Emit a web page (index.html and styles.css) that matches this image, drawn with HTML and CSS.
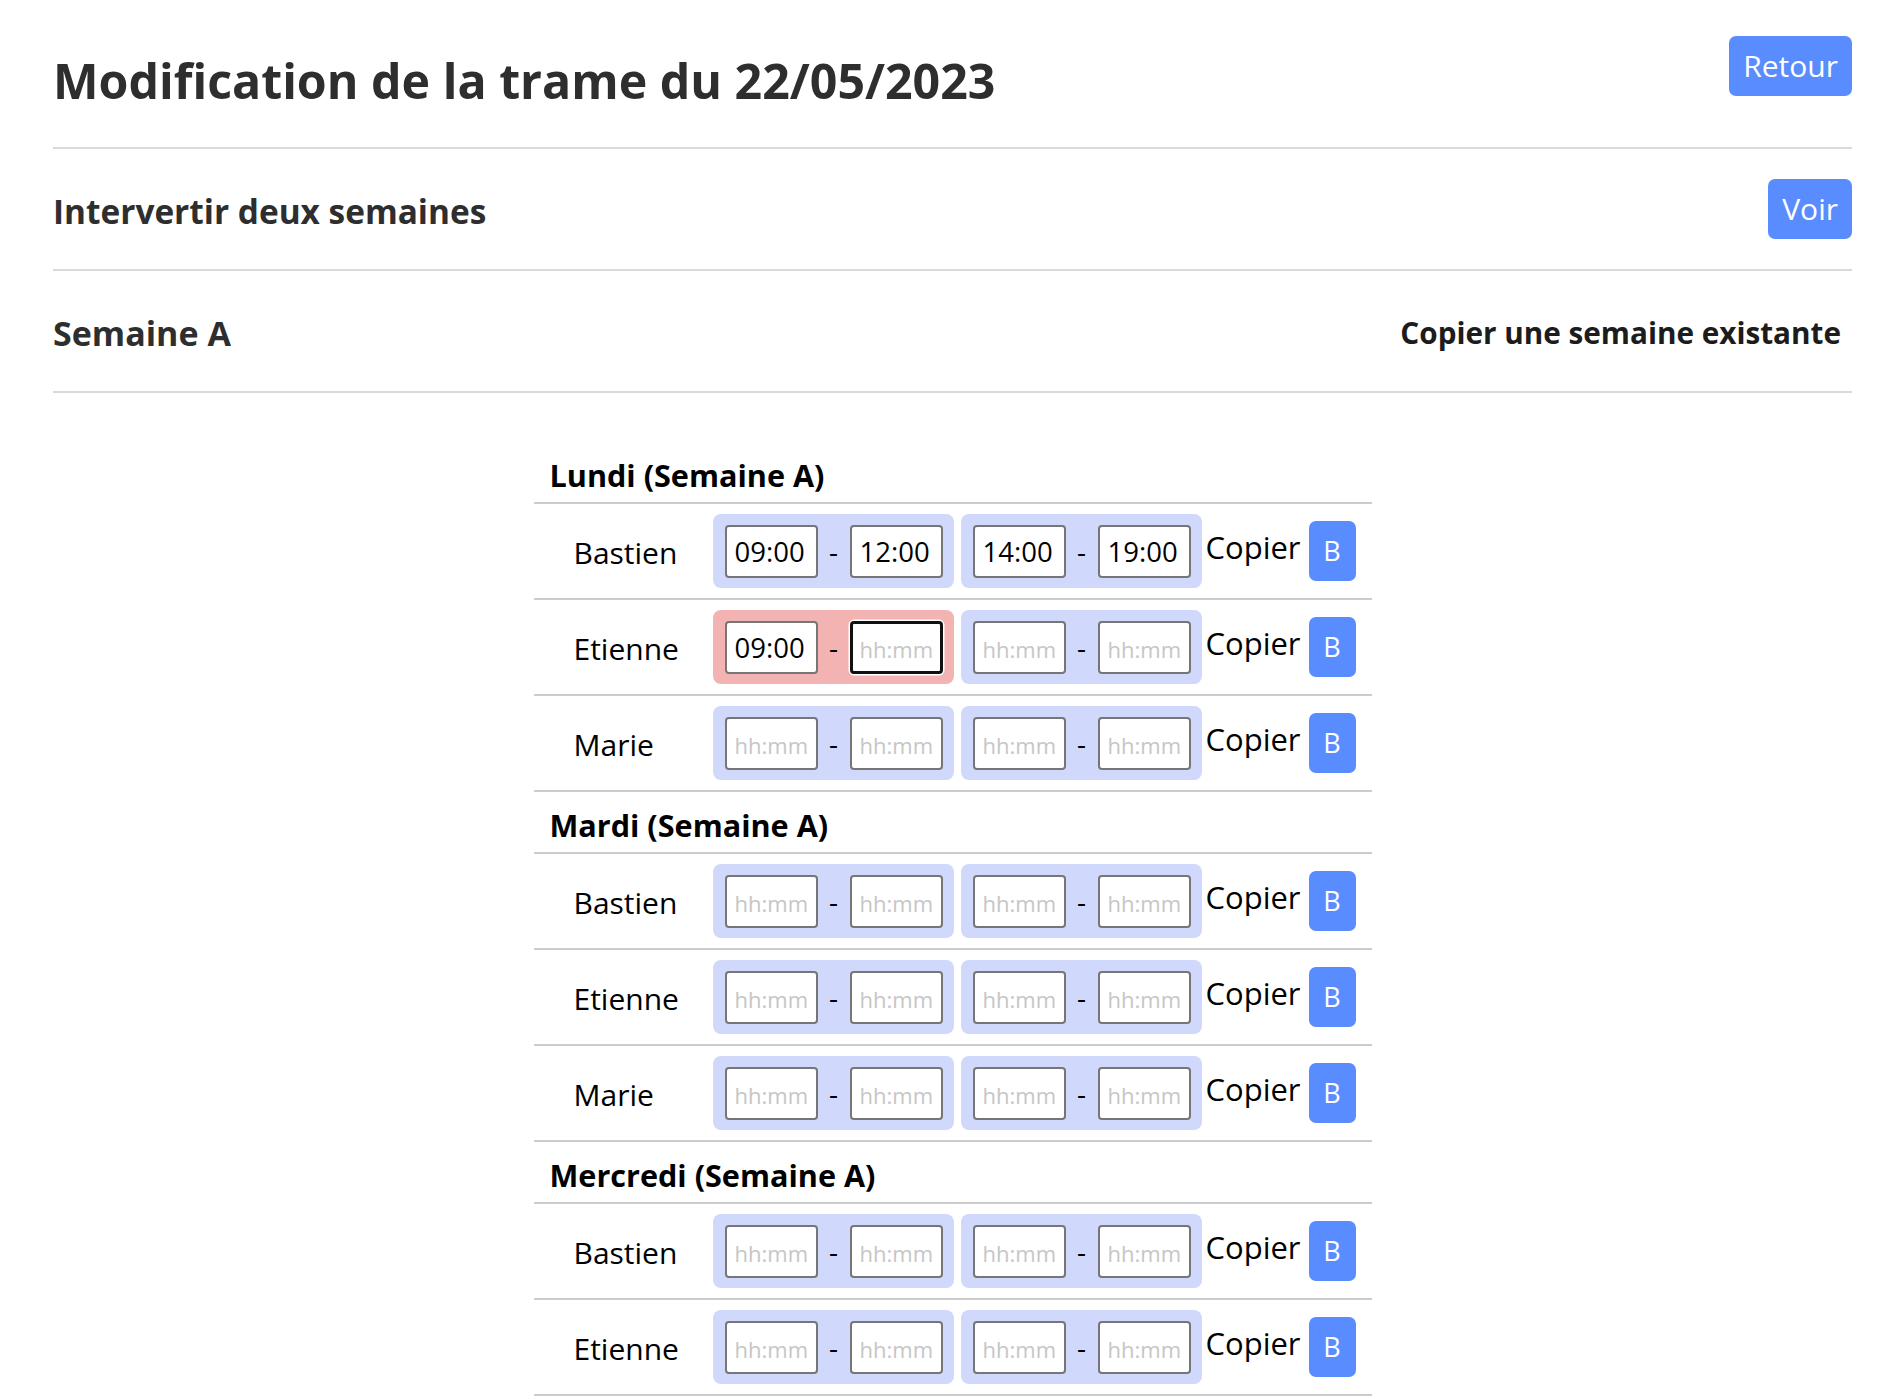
FILE: index.html
```html
<!DOCTYPE html>
<html lang="fr">
<head>
<meta charset="utf-8">
<title>Modification de la trame</title>
<link rel="stylesheet" href="styles.css">
</head>
<body>
<div class="page">
  <header class="bar bar--title">
    <h1 class="title">Modification de la trame du 22/05/2023</h1>
    <button class="btn">Retour</button>
  </header>
  <section class="bar bar--swap">
    <h2 class="subtitle">Intervertir deux semaines</h2>
    <button class="btn">Voir</button>
  </section>
  <section class="bar bar--week">
    <h2 class="subtitle">Semaine A</h2>
    <span class="copy-week">Copier une semaine existante</span>
  </section>

  <div class="trame">
    <div class="day">Lundi (Semaine A)</div>
    <div class="row">
      <div class="name">Bastien</div>
      <div class="slot"><input class="time" value="09:00" placeholder="hh:mm"><span class="dash">-</span><input class="time" value="12:00" placeholder="hh:mm"></div>
      <div class="slot"><input class="time" value="14:00" placeholder="hh:mm"><span class="dash">-</span><input class="time" value="19:00" placeholder="hh:mm"></div>
      <span class="copier">Copier</span><button class="bbtn">B</button>
    </div>
    <div class="row">
      <div class="name">Etienne</div>
      <div class="slot slot--error"><input class="time" value="09:00" placeholder="hh:mm"><span class="dash">-</span><input class="time time--focus" placeholder="hh:mm"></div>
      <div class="slot"><input class="time" placeholder="hh:mm"><span class="dash">-</span><input class="time" placeholder="hh:mm"></div>
      <span class="copier">Copier</span><button class="bbtn">B</button>
    </div>
    <div class="row">
      <div class="name">Marie</div>
      <div class="slot"><input class="time" placeholder="hh:mm"><span class="dash">-</span><input class="time" placeholder="hh:mm"></div>
      <div class="slot"><input class="time" placeholder="hh:mm"><span class="dash">-</span><input class="time" placeholder="hh:mm"></div>
      <span class="copier">Copier</span><button class="bbtn">B</button>
    </div>

    <div class="day">Mardi (Semaine A)</div>
    <div class="row">
      <div class="name">Bastien</div>
      <div class="slot"><input class="time" placeholder="hh:mm"><span class="dash">-</span><input class="time" placeholder="hh:mm"></div>
      <div class="slot"><input class="time" placeholder="hh:mm"><span class="dash">-</span><input class="time" placeholder="hh:mm"></div>
      <span class="copier">Copier</span><button class="bbtn">B</button>
    </div>
    <div class="row">
      <div class="name">Etienne</div>
      <div class="slot"><input class="time" placeholder="hh:mm"><span class="dash">-</span><input class="time" placeholder="hh:mm"></div>
      <div class="slot"><input class="time" placeholder="hh:mm"><span class="dash">-</span><input class="time" placeholder="hh:mm"></div>
      <span class="copier">Copier</span><button class="bbtn">B</button>
    </div>
    <div class="row">
      <div class="name">Marie</div>
      <div class="slot"><input class="time" placeholder="hh:mm"><span class="dash">-</span><input class="time" placeholder="hh:mm"></div>
      <div class="slot"><input class="time" placeholder="hh:mm"><span class="dash">-</span><input class="time" placeholder="hh:mm"></div>
      <span class="copier">Copier</span><button class="bbtn">B</button>
    </div>

    <div class="day">Mercredi (Semaine A)</div>
    <div class="row">
      <div class="name">Bastien</div>
      <div class="slot"><input class="time" placeholder="hh:mm"><span class="dash">-</span><input class="time" placeholder="hh:mm"></div>
      <div class="slot"><input class="time" placeholder="hh:mm"><span class="dash">-</span><input class="time" placeholder="hh:mm"></div>
      <span class="copier">Copier</span><button class="bbtn">B</button>
    </div>
    <div class="row">
      <div class="name">Etienne</div>
      <div class="slot"><input class="time" placeholder="hh:mm"><span class="dash">-</span><input class="time" placeholder="hh:mm"></div>
      <div class="slot"><input class="time" placeholder="hh:mm"><span class="dash">-</span><input class="time" placeholder="hh:mm"></div>
      <span class="copier">Copier</span><button class="bbtn">B</button>
    </div>
  </div>
</div>
</body>
</html>
```

FILE: styles.css
```css
html, body {
  margin: 0;
  padding: 0;
  background: #ffffff;
}

body {
  font-family: "Open Sans", "Noto Sans", "DejaVu Sans", sans-serif;
  color: #000000;
}

.page {
  padding: 0 51px 0 53px;
}

.bar {
  display: flex;
  justify-content: space-between;
  align-items: flex-start;
  border-bottom: 2px solid #d9d9d9;
}

.bar--title {
  padding: 36px 0 37px;
}

.bar--swap {
  padding: 30px 0 27px;
}

.bar--week {
  padding: 31px 0 27px;
}

.title {
  margin: 14px 0 0;
  font-size: 48.3px;
  line-height: 60px;
  font-weight: 700;
  color: #2e2e2e;
}

.subtitle {
  margin: 1px 0 0;
  font-size: 33.4px;
  line-height: 62px;
  font-weight: 700;
  color: #2e2e2e;
}

.bar--week .subtitle {
  margin-top: 0;
  font-size: 34px;
}

.copy-week {
  padding-right: 11px;
  font-size: 29.7px;
  line-height: 62px;
  font-weight: 700;
  color: #1c1c1c;
}

.btn {
  height: 60px;
  padding: 0 14px;
  border: 0;
  border-radius: 7px;
  background: #598cff;
  color: #ffffff;
  font-family: inherit;
  font-size: 30px;
  line-height: 60px;
}

.trame {
  width: 838px;
  margin: 49px auto 0;
}

.day {
  padding: 6px 0 0 16px;
  line-height: 54px;
  font-size: 30.6px;
  font-weight: 700;
  border-bottom: 2px solid #cccccc;
}

.row {
  display: flex;
  align-items: flex-start;
  height: 96px;
  box-sizing: border-box;
  padding-top: 10px;
  border-bottom: 2px solid #cccccc;
}

.name {
  width: 179px;
  box-sizing: border-box;
  padding: 2px 0 0 40px;
  font-size: 30px;
  line-height: 74px;
}

.slot {
  display: flex;
  align-items: center;
  width: 241px;
  height: 74px;
  box-sizing: border-box;
  padding: 0 11px 0 12px;
  background: #d0d8fb;
  border-radius: 8px;
}

.slot + .slot {
  margin-left: 7px;
}

.slot--error {
  background: #f4b3b3;
}

.dash {
  width: 32px;
  text-align: center;
  font-size: 28px;
  line-height: 40px;
}

.time {
  width: 93px;
  height: 53px;
  box-sizing: border-box;
  margin: 0;
  padding: 0 8px;
  border: 2px solid #767676;
  border-radius: 4px;
  background: #ffffff;
  color: #000000;
  font-family: inherit;
  font-size: 27.5px;
  outline: none;
}

.time::placeholder {
  color: #c6c6c6;
  font-size: 22px;
}

.time--focus {
  border: 3px solid #111111;
  padding: 0 7px;
  box-shadow: 0 0 0 1.5px #ffffff;
}

.copier {
  margin-left: 4px;
  font-size: 31px;
  line-height: 66px;
}

.bbtn {
  width: 47px;
  height: 60px;
  margin: 7px 0 0 8px;
  padding: 0;
  border: 0;
  border-radius: 7px;
  background: #598cff;
  color: #ffffff;
  font-family: inherit;
  font-size: 27px;
  line-height: 60px;
  text-align: center;
}
```
